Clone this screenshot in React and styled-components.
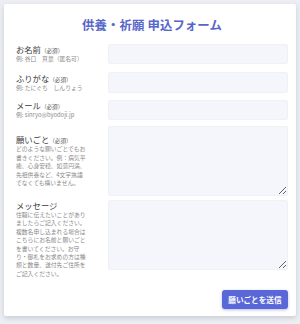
import styled, { createGlobalStyle } from "styled-components";

const Global = createGlobalStyle`
  html, body {
    margin: 0;
    padding: 0;
    background: #eceef3;
  }
  body {
    font-family: "Noto Sans CJK JP", "Noto Sans", sans-serif;
  }
`;

const Page = styled.div`
  padding: 4px 4px 8px 4px;
  height: 324px;
  box-sizing: border-box;
`;

const Card = styled.form`
  background: #fff;
  border-radius: 2px;
  box-shadow: 0 2px 5px rgba(40, 50, 80, 0.18);
  padding: 13px 8px 7px 12px;
  display: flex;
  flex-direction: column;
`;

const Title = styled.h1`
  margin: 0 0 11px;
  text-align: center;
  font-size: 12.4px;
  line-height: 16px;
  font-weight: 700;
  color: #5866c9;
  letter-spacing: 0.1px;
`;

const Row = styled.div`
  display: grid;
  grid-template-columns: 72px 1fr;
  column-gap: 20px;
  align-items: ${(p) => (p.$center ? "center" : "start")};
  margin-top: ${(p) => p.$mt || 0}px;
`;

const LabelBox = styled.div`
  display: flex;
  flex-direction: column;
`;

const Label = styled.label`
  display: block;
  height: 11px;
  font-size: 8.3px;
  line-height: 11px;
  color: #3b3b3b;
  white-space: nowrap;
`;

const Req = styled.span`
  font-size: 5.6px;
  line-height: 1;
  color: #555;
`;

const Hint = styled.div`
  font-size: 5.8px;
  line-height: 8.4px;
  color: #8a8a8a;
`;

const Input = styled.input`
  box-sizing: border-box;
  width: 100%;
  height: ${(p) => p.$h || 20}px;
  border: 1px solid #eef1f6;
  border-radius: 2px;
  background: #f4f6fb;
  outline: none;
`;

const Area = styled.textarea`
  box-sizing: border-box;
  width: 100%;
  height: 70px;
  display: block;
  border: 1px solid #eef1f6;
  border-radius: 2px;
  background: #f4f6fb;
  resize: vertical;
  outline: none;
`;

const Footer = styled.div`
  display: flex;
  justify-content: flex-end;
  margin-top: 12px;
`;

const Submit = styled.button`
  height: 19px;
  padding: 0 6.5px;
  border: none;
  border-radius: 3px;
  background: #5a67d8;
  color: #fff;
  font-family: inherit;
  font-size: 7.6px;
  font-weight: 700;
  box-shadow: 0 1px 3px rgba(60, 70, 160, 0.35);
  cursor: pointer;
`;

const fields = [
  { label: "お名前", hint: "例: 谷口　真葉（匿名可）", mt: 0 },
  { label: "ふりがな", hint: "例: たにぐち　しんりょう", mt: 8, h: 21 },
  { label: "メール", hint: "例: sinryo@byodoji.jp", mt: 7 },
];

export default function App() {
  return (
    <Page>
      <Global />
      <Card onSubmit={(e) => e.preventDefault()}>
        <Title>供養・祈願 申込フォーム</Title>

        {fields.map((f) => (
          <Row key={f.label} $mt={f.mt} $center>
            <LabelBox>
              <Label>
                {f.label}
                <Req>（必須）</Req>
              </Label>
              <Hint>{f.hint}</Hint>
            </LabelBox>
            <Input $h={f.h} />
          </Row>
        ))}

        <Row $mt={6} $center>
          <LabelBox>
            <Label>
              願いごと<Req>（必須）</Req>
            </Label>
            <Hint>
              どのような願いごとでもお書きください。例：病気平癒、心身安穏、如意円満、先祖供養など、4文字熟語でなくても構いません。
            </Hint>
          </LabelBox>
          <Area />
        </Row>

        <Row $mt={4}>
          <LabelBox>
            <Label>メッセージ</Label>
            <Hint>
              住職に伝えたいことがありましたらご記入ください。複数名申し込まれる場合はこちらにお名前と願いごとを書いてください。お守り・御札をお求めの方は種類と数量、送付先ご住所をご記入ください。
            </Hint>
          </LabelBox>
          <Area />
        </Row>

        <Footer>
          <Submit type="submit">願いごとを送信</Submit>
        </Footer>
      </Card>
    </Page>
  );
}
